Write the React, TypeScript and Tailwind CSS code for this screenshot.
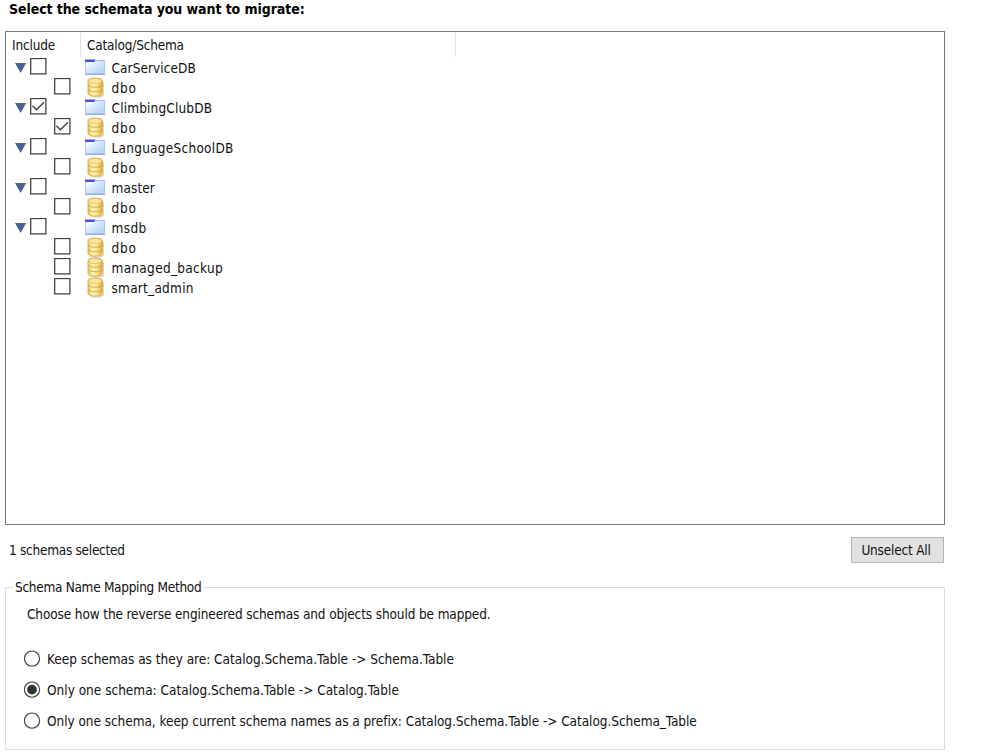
import React from "react";

type Row = { name: string; kind: "catalog" | "schema"; checked?: boolean; tracking: string };

const rows: Row[] = [
  { name: "CarServiceDB", kind: "catalog", tracking: "tracking-[0.07px]" },
  { name: "dbo", kind: "schema", tracking: "tracking-[0.8px]" },
  { name: "ClimbingClubDB", kind: "catalog", checked: true, tracking: "tracking-[0.15px]" },
  { name: "dbo", kind: "schema", checked: true, tracking: "tracking-[0.8px]" },
  { name: "LanguageSchoolDB", kind: "catalog", tracking: "tracking-[0.26px]" },
  { name: "dbo", kind: "schema", tracking: "tracking-[0.8px]" },
  { name: "master", kind: "catalog", tracking: "tracking-[0.1px]" },
  { name: "dbo", kind: "schema", tracking: "tracking-[0.8px]" },
  { name: "msdb", kind: "catalog", tracking: "tracking-[0.4px]" },
  { name: "dbo", kind: "schema", tracking: "tracking-[0.8px]" },
  { name: "managed_backup", kind: "schema", tracking: "tracking-[0.3px]" },
  { name: "smart_admin", kind: "schema", tracking: "tracking-[0.25px]" },
];

const methods = [
  { label: "Keep schemas as they are: Catalog.Schema.Table -> Schema.Table", tracking: "tracking-[-0.02px]" },
  { label: "Only one schema: Catalog.Schema.Table -> Catalog.Table", tracking: "tracking-[0px]", selected: true },
  {
    label: "Only one schema, keep current schema names as a prefix: Catalog.Schema.Table -> Catalog.Schema_Table",
    tracking: "tracking-[-0.05px]",
  },
];

function Checkbox({ checked }: { checked?: boolean }) {
  return (
    <svg width="17" height="17" viewBox="0 0 17 17" className="block shrink-0">
      <rect x="0.7" y="0.5" width="15.2" height="15.4" fill="#fff" stroke="#444" strokeWidth="1.3" />
      {checked && <path d="M2.4 7.8 6.4 11.8 14 4.2" fill="none" stroke="#444" strokeWidth="1.4" />}
    </svg>
  );
}

function FolderIcon() {
  return (
    <svg width="22" height="17" viewBox="0 0 22 17" className="block">
      <defs>
        <linearGradient id="folder" x1="0" y1="0" x2="1" y2="1">
          <stop offset="0.15" stopColor="#f4f9ff" />
          <stop offset="1" stopColor="#a9cdf8" />
        </linearGradient>
      </defs>
      <path d="M0.5 15.4h19.6" stroke="#8f9bab" strokeWidth="1.4" opacity="0.8" />
      <rect x="0.5" y="1.8" width="19" height="12.8" fill="url(#folder)" stroke="#a8c4ea" strokeWidth="0.9" />
      <path d="M10 1.4h9.8" stroke="#a9b9ea" strokeWidth="1" />
      <path d="M0 0.6h10.4L9.2 3H0z" fill="#4750da" />
    </svg>
  );
}

function DatabaseIcon() {
  return (
    <svg width="18" height="21" viewBox="0 0 18 21" className="block">
      <defs>
        <linearGradient id="gold" x1="0" y1="0" x2="1" y2="0">
          <stop offset="0" stopColor="#efc95b" />
          <stop offset="0.35" stopColor="#fff5bd" />
          <stop offset="0.65" stopColor="#fae086" />
          <stop offset="1" stopColor="#dfaf3c" />
        </linearGradient>
      </defs>
      <path d="M3 18.6c2.4 2 10.6 2 13.3-.4V5" fill="none" stroke="#777" strokeWidth="1.2" opacity="0.35" />
      <path d="M1 3.7C1 .1 15.3.1 15.3 3.7v12.8c0 3.5-14.3 3.5-14.3 0z" fill="url(#gold)" stroke="#d6ab42" strokeWidth="0.9" />
      <ellipse cx="8.15" cy="4" rx="6.6" ry="2.6" fill="#fbe69c" stroke="#e2bb56" strokeWidth="0.7" />
      <path d="M1.2 8.2c1.4 2.7 12.6 2.7 14 0M1.2 12.7c1.4 2.7 12.6 2.7 14 0" fill="none" stroke="#c2973a" strokeWidth="0.75" />
    </svg>
  );
}

function TreeRow({ row }: { row: Row }) {
  const catalog = row.kind === "catalog";
  return (
    <div className="flex h-5 items-center">
      <div className="flex w-[79px] shrink-0 items-center pb-[2px]">
        {catalog ? (
          <svg width="24" height="17" viewBox="0 0 24 17" className="block shrink-0">
            <path d="M9 5h11.2L14.6 15z" fill="#48628b" />
          </svg>
        ) : (
          <span className="w-12 shrink-0" />
        )}
        <Checkbox checked={row.checked} />
      </div>
      <div className={catalog ? "w-[26.5px] shrink-0 pt-px" : "w-[26.5px] shrink-0 pl-[2px] pt-px"}>
        {catalog ? <FolderIcon /> : <DatabaseIcon />}
      </div>
      <span className={`pt-px ${row.tracking}`}>{row.name}</span>
    </div>
  );
}

function Radio({ selected }: { selected?: boolean }) {
  return (
    <svg width="17" height="17" viewBox="0 0 17 17" className="block shrink-0">
      <circle cx="8" cy="8.6" r="7.6" fill="#fff" stroke="#444" strokeWidth="1.15" />
      {selected && <circle cx="8" cy="8.6" r="4.9" fill="#333" />}
    </svg>
  );
}

export default function App() {
  return (
    <main className="h-[755px] w-[998px] overflow-hidden whitespace-nowrap bg-white pl-[5px] font-['DejaVu_Sans_Condensed','DejaVu_Sans',sans-serif] text-[13.5px] leading-5 text-[#111] [font-stretch:condensed]">
      <h1 className="h-[31px] pl-[4px] text-[14px] font-bold leading-[18px] tracking-[-0.08px] text-black">
        Select the schemata you want to migrate:
      </h1>
      <section className="h-[494px] w-[940px] border border-[#787878]">
        <div className="flex h-[25px] leading-[26px]">
          <div className="w-[75px] border-r border-[#e2e2e2] pl-[6px] tracking-[-0.15px]">Include</div>
          <div className="w-[375px] border-r border-[#e2e2e2] pl-[6px] tracking-[-0.2px]">Catalog/Schema</div>
        </div>
        {rows.map((row, i) => (
          <TreeRow key={i} row={row} />
        ))}
      </section>
      <div className="flex h-[62px] w-[939px] items-start justify-between pl-[4px] pt-[12px]">
        <span className="pt-[3px] tracking-[-0.27px]">1 schemas selected</span>
        <button className="h-[26px] w-[93px] border border-[#b5b5b5] bg-[#e1e1e1] pr-[3px] leading-6 tracking-[-0.2px]">
          Unselect All
        </button>
      </div>
      <fieldset className="-mt-[10px] h-[173px] w-[940px] border border-[#dedede]">
        <legend className="ml-[7px] px-[2px] leading-5 tracking-[-0.29px]">Schema Name Mapping Method</legend>
        <p className="mt-[7px] pl-[21px] tracking-[-0.125px]">
          Choose how the reverse engineered schemas and objects should be mapped.
        </p>
        <div className="mt-[19px] flex flex-col">
          {methods.map((m) => (
            <label key={m.label} className="flex h-[31px] items-center gap-[6px] pl-[18px]">
              <Radio selected={m.selected} />
              <span className={`pt-px ${m.tracking}`}>{m.label}</span>
            </label>
          ))}
        </div>
      </fieldset>
    </main>
  );
}
